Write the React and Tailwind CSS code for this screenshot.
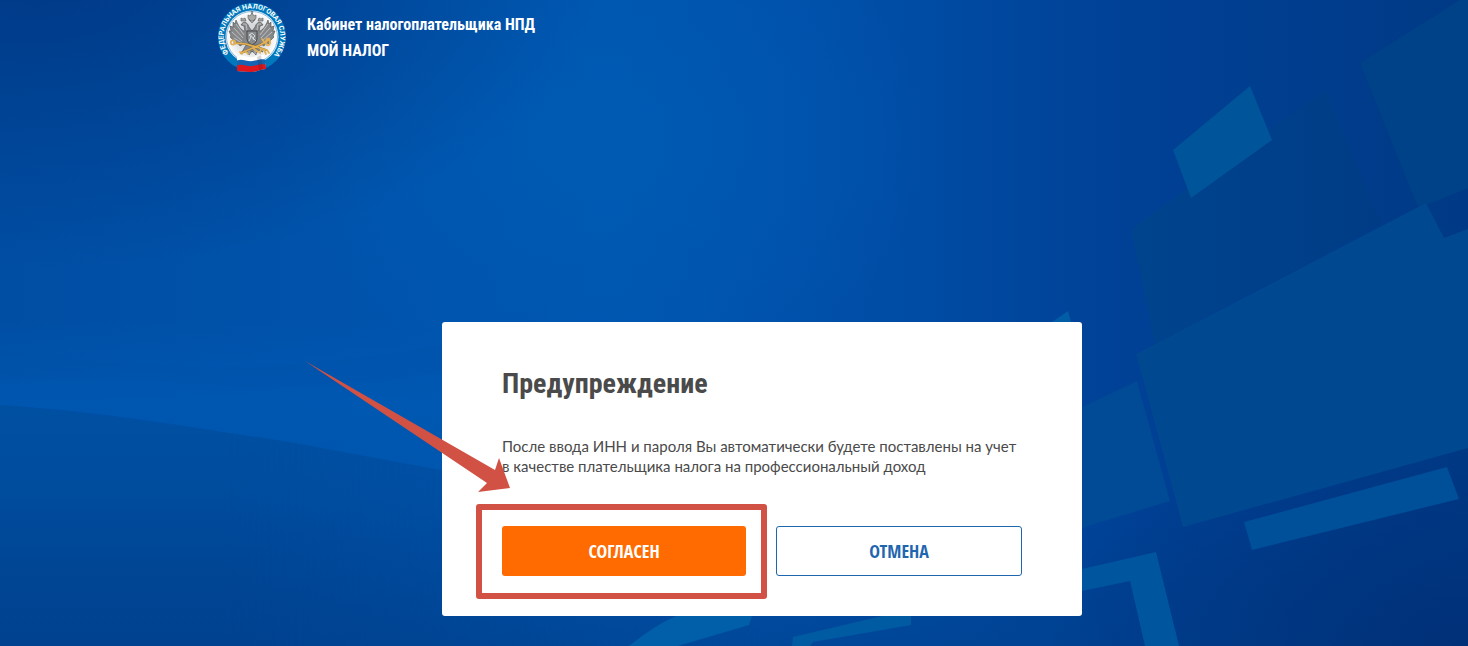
function Backdrop() {
  return (
    <svg className="absolute inset-0 -z-10 h-full w-full" viewBox="0 0 1468 646" preserveAspectRatio="xMidYMid slice" aria-hidden="true">
      <defs>
        <linearGradient id="base" x1="0" y1="0" x2="1468" y2="0" gradientUnits="userSpaceOnUse">
          <stop offset="0" stopColor="#004ea4" />
          <stop offset="0.42" stopColor="#0056b0" />
          <stop offset="0.62" stopColor="#004ca5" />
          <stop offset="0.78" stopColor="#004095" />
          <stop offset="1" stopColor="#003a86" />
        </linearGradient>
        <radialGradient id="glow" cx="0" cy="0" r="1" gradientUnits="userSpaceOnUse" gradientTransform="translate(600 140) scale(330 260)">
          <stop offset="0" stopColor="#005ab2" />
          <stop offset="1" stopColor="#005ab2" stopOpacity="0" />
        </radialGradient>
        <radialGradient id="shadeTop" cx="0" cy="0" r="1" gradientUnits="userSpaceOnUse" gradientTransform="translate(40 -30) scale(560 300)">
          <stop offset="0" stopColor="#003986" />
          <stop offset="1" stopColor="#003986" stopOpacity="0" />
        </radialGradient>
        <linearGradient id="sweep" x1="0" y1="405" x2="0" y2="646" gradientUnits="userSpaceOnUse">
          <stop offset="0" stopColor="#0050a2" />
          <stop offset="1" stopColor="#004494" />
        </linearGradient>
        <linearGradient id="sweepFade" x1="0" y1="0" x2="760" y2="0" gradientUnits="userSpaceOnUse">
          <stop offset="0" stopColor="#fff" />
          <stop offset="0.3" stopColor="#fff" />
          <stop offset="1" stopColor="#fff" stopOpacity="0" />
        </linearGradient>
        <mask id="sweepMask">
          <rect width="1468" height="646" fill="url(#sweepFade)" />
        </mask>
        <radialGradient id="shadeCorner" cx="0" cy="0" r="1" gradientUnits="userSpaceOnUse" gradientTransform="translate(1468 646) scale(420 230)">
          <stop offset="0" stopColor="#003078" />
          <stop offset="1" stopColor="#003078" stopOpacity="0" />
        </radialGradient>
        <linearGradient id="shadeBottom" x1="0" y1="500" x2="0" y2="646" gradientUnits="userSpaceOnUse">
          <stop offset="0" stopColor="#00408c" stopOpacity="0" />
          <stop offset="1" stopColor="#00408c" stopOpacity="0.55" />
        </linearGradient>
        <linearGradient id="band" x1="0" y1="320" x2="0" y2="450" gradientUnits="userSpaceOnUse">
          <stop offset="0" stopColor="#005ab4" stopOpacity="0" />
          <stop offset="0.65" stopColor="#005ab4" />
          <stop offset="1" stopColor="#0058b0" />
        </linearGradient>
        <linearGradient id="panelDark" x1="1131" y1="0" x2="1382" y2="0" gradientUnits="userSpaceOnUse">
          <stop offset="0" stopColor="#00458c" />
          <stop offset="1" stopColor="#003c85" />
        </linearGradient>
      </defs>
      <rect width="1468" height="646" fill="url(#base)" />
      <rect width="1468" height="646" fill="url(#glow)" />
      <rect width="1468" height="646" fill="url(#shadeTop)" />
      <path d="M0 320H442V470L240 435Q110 412 0 405Z" fill="url(#band)" opacity="0.7" />
      <path d="M0 380Q130 376 250 388Q360 384 442 372L442 345Q240 385 0 350Z" fill="#0050a6" opacity="0.2" />
      <path d="M0 405Q120 416 290 442L860 548V646H0Z" fill="url(#sweep)" mask="url(#sweepMask)" />
      <rect y="500" width="1468" height="146" fill="url(#shadeBottom)" />
      <rect width="1468" height="646" fill="url(#shadeCorner)" />
      <path d="M1131 229L1325 90L1382 224L1155 344Z" fill="url(#panelDark)" opacity="0.8" />
      <path d="M1360 63L1460 0H1468V188L1431 203L1418 207Z" fill="#004287" />
      <path d="M1136 354L1426 203L1444 238L1468 229V448L1183 527Z" fill="#004890" />
      <path d="M1082 407L1137 381L1170 501L1082 528Z" fill="#004a96" />
      <path d="M1173 150L1250 86L1272 140L1191 198Z" fill="#005499" />
      <path d="M1244 522L1447 467L1459 499L1252 550Z" fill="#004f99" />
      <path d="M1082 569L1156 552L1179 646H1145L1130 581L1082 591Z" fill="#00559f" />
      <path d="M1052 322L1068 311L1071 322Z" fill="#005da6" />
      <path d="M629 646Q655 625 676 616H752L749 625L678 646Z" fill="#005fa8" />
      <path d="M792 646L793 637L882 616H911V625L813 642L810 646Z" fill="#005ba2" />
    </svg>
  );
}

function Emblem() {
  return (
    <svg className="h-[72px] w-[72px] shrink-0" viewBox="0 0 72 72" role="img" aria-label="Федеральная налоговая служба">
      <defs>
        <path id="ring" d="M12.7 52.3A28.4 28.4 0 1 1 58.6 53" />
        <radialGradient id="disc">
          <stop offset="0.5" stopColor="#d7dadc" />
          <stop offset="1" stopColor="#ffffff" />
        </radialGradient>
      </defs>
      <circle cx="36" cy="36" r="34" fill="#0078be" />
      <circle cx="36" cy="36" r="26.5" fill="#e9f2f8" />
      <circle cx="36" cy="36" r="25.5" fill="url(#disc)" stroke="#4a90c0" strokeWidth="0.6" />
      <text className="font-['Roboto'] text-[7px] font-bold" fill="#fff">
        <textPath href="#ring">ФЕДЕРАЛЬНАЯ НАЛОГОВАЯ СЛУЖБА</textPath>
      </text>
      <g fill="#858789" stroke="#4e5052" strokeWidth="0.6" strokeLinejoin="round">
        <path d="M33 26C31 20 27 20 25 24L28 25L29 30C25 30 22 24 20 19L19 23L17 21L17 26L14 25L15 30L13 30L15 35L14 36L18 40L18 43L22 42L24 45L29 42L32 47L36 51L40 47L43 42L48 45L50 42L54 43L54 40L58 36L57 35L59 30L57 30L58 25L55 26L55 21L53 23L52 19C50 24 47 30 43 30L44 25L47 24C45 20 41 20 39 26L36 30Z" />
        <path d="M30 44L26 51L31 49L33 54L36 50L40 54L41 49L47 51L42 44Z" />
      </g>
      <g fill="none" stroke="#d5d7d8" strokeWidth="0.7">
        <path d="M20 23L28 34M18 27L27 37M16 31L26 40M18 37L26 42M52 23L44 34M54 27L45 37M56 31L46 40M54 37L46 42" />
        <path d="M27 23H30L31 29M45 23H42L41 29M33 49V53M39 49V53" />
      </g>
      <path d="M32 17L32 14L34 15L36 12L38 15L40 14L40 17L38 20H34ZM25 20L25 17L27 18L29 17L30 20ZM42 20L43 17L45 18L47 17L47 20Z" fill="#a9a9a6" stroke="#55585a" strokeWidth="0.6" />
      <path d="M36 10V13M34.8 11H37.2M33 18L36 22L39 18" stroke="#55585a" strokeWidth="0.7" fill="none" />
      <path d="M31 30H41V38Q41 42 36 44Q31 42 31 38Z" fill="#898c8e" stroke="#393b3d" strokeWidth="0.8" />
      <path d="M33 40L35 36L33 34L36 32L39 35L37 37L40 40M34 33L38 39" stroke="#e7e8e8" strokeWidth="0.8" fill="none" />
      <g fill="none" stroke="#876426" strokeWidth="2.2" strokeLinecap="round">
        <path d="M19 42L30 43L50 49M53 39L44 44L25 52" />
      </g>
      <g fill="none" stroke="#e3b154" strokeWidth="1.7" strokeLinecap="round">
        <path d="M19 42L30 43L50 49M53 39L44 44L25 52" />
        <circle cx="17" cy="41.5" r="2.2" />
        <path d="M45 48L44 52M48 49L50 53M51 49L53 52M24 51L26 53M29 50L32 53M46 38L49 42M37 47L42 51" />
        <ellipse cx="52" cy="41" rx="2" ry="3.4" />
      </g>
      <path d="M21 55C26 53 31 57 37 56C42 55 45 53 48 54L50 68C45 68 41 71 35 71C29 71 25 70 21 70Z" fill="#fff" />
      <path d="M21 59.5C26 57 31 61 37 60C42 59 45 58 49 58.5L50 68C45 68 41 71 35 71C29 71 25 70 21 70Z" fill="#1763b1" />
      <path d="M21 64.5C26 62 31 66 37 65C42 64 45 63 49.5 63.5L50 68C45 68 41 71 35 71C29 71 25 70 21 70Z" fill="#df171c" />
      <path d="M41 56L43 70L47 68L45 54Z" fill="#24212c" opacity="0.18" />
    </svg>
  );
}

function Pointer() {
  return (
    <svg className="pointer-events-none absolute -left-36 top-9 h-36 w-56" viewBox="298 358 224 144" aria-hidden="true">
      <path d="M305 361L495 470L499 458L510 488L478 492L487 483Z" fill="#d15144" />
    </svg>
  );
}

export default function App() {
  return (
    <div className="relative isolate flex min-h-screen flex-col overflow-hidden bg-[#004b9f] font-['Lato','Noto_Sans',sans-serif]">
      <Backdrop />
      <header className="mx-auto flex w-full max-w-[1036px] gap-[19px] pt-px">
        <Emblem />
        <h1 className="pt-[11px] font-['Roboto_Condensed','Roboto',sans-serif] text-base leading-[26px] font-bold text-white">
          Кабинет налогоплательщика НПД
          <br />
          МОЙ НАЛОГ
        </h1>
      </header>
      <main className="flex grow items-end justify-center pb-[30px] pl-14">
        <section role="dialog" aria-labelledby="warning-title" className="relative w-full max-w-[640px] rounded-[3px] bg-white px-[60px] py-10 text-[#4a4a4a]">
          <h2 id="warning-title" className="font-['Roboto_Condensed','Roboto',sans-serif] text-[28px] leading-[44px] font-bold">Предупреждение</h2>
          <p className="pt-[30px] text-[15px] leading-5 whitespace-nowrap">
            После ввода ИНН и пароля Вы автоматически будете поставлены на учет
            <br />в качестве плательщика налога на профессиональный доход
          </p>
          <div className="flex gap-[30px] pt-[50px] font-['Open_Sans_Condensed','Lato',sans-serif] text-lg font-bold">
            <div className="relative flex-1">
              <button type="button" className="h-[50px] w-full rounded-[3px] bg-[#ff6b00] text-white">СОГЛАСЕН</button>
              <div className="pointer-events-none absolute -top-[22px] -right-[21px] -bottom-[23px] -left-[26px] rounded-[3px] border-[6px] border-[#d15144]" />
            </div>
            <button type="button" className="h-[50px] flex-1 rounded-[3px] border border-[#1f66b0] text-[#1f66b0]">ОТМЕНА</button>
          </div>
          <Pointer />
        </section>
      </main>
    </div>
  );
}
